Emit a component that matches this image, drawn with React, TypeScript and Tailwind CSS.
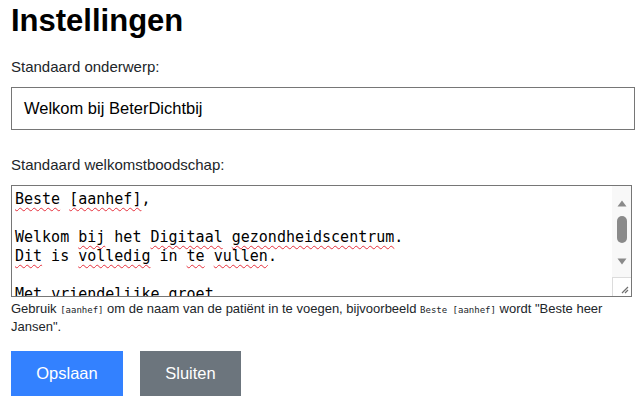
import React from "react";

const sans = { fontFamily: '"Liberation Sans", Arial, sans-serif' };
const mono = { fontFamily: '"DejaVu Sans Mono", "Liberation Mono", monospace' };

// words the spell checker flags get a red wavy underline
function Typo({ children }: { children: React.ReactNode }) {
  return (
    <span className="underline decoration-wavy decoration-[#e5303c] decoration-[1.2px] underline-offset-[3px]">
      {children}
    </span>
  );
}

function ScrollColumn() {
  return (
    <div className="w-[19px] shrink-0 flex flex-col items-center bg-[#f8f8f8]">
      <svg width="10" height="7" viewBox="0 0 10 7" className="mt-[14px]">
        <path d="M5 0.5 L9.5 6.5 L0.5 6.5 Z" fill="#8a8a8a" />
      </svg>
      <div className="mt-[9px] w-[10px] h-[27px] rounded-full bg-[#8a8a8a]" />
      <svg width="10" height="7" viewBox="0 0 10 7" className="mt-[15px]">
        <path d="M0.5 0.5 L9.5 0.5 L5 6.5 Z" fill="#8a8a8a" />
      </svg>
      <div className="mt-auto w-full h-[19px] border-t border-l border-[#dcdcdc] bg-white flex items-end justify-end">
        <svg width="10" height="10" viewBox="0 0 10 10" className="mb-[2px] mr-[2px]">
          <path d="M9 3 L3 9 M9 6 L6 9" stroke="#6f6f6f" strokeWidth="1.2" />
        </svg>
      </div>
    </div>
  );
}

export default function App() {
  return (
    <div className="w-[640px] h-[400px] overflow-hidden bg-white text-[#212529] px-[11px]" style={sans}>
      <h1 className="text-[31px] font-bold leading-[37px] text-black pt-[2px]">Instellingen</h1>

      <label className="block mt-[19px] text-[15px] leading-[17px]">Standaard onderwerp:</label>
      <div className="mt-[12px] w-[624px] h-[43px] border border-[#767676] flex items-center px-[12px] text-[16.5px] text-black">
        Welkom bij BeterDichtbij
      </div>

      <label className="block mt-[26px] text-[15px] leading-[17px]">Standaard welkomstboodschap:</label>
      <div className="mt-[12px] w-[621px] h-[112px] border border-[#767676] flex overflow-hidden">
        <div className="flex-1 overflow-hidden pl-[3px] pt-[4px] text-[15px] leading-[19px] text-black whitespace-pre" style={mono}>
          <div><Typo>Beste</Typo> <Typo>[aanhef]</Typo>,</div>
          <div>&nbsp;</div>
          <div>Welkom <Typo>bij</Typo> het <Typo>Digitaal</Typo> <Typo>gezondheidscentrum</Typo>.</div>
          <div><Typo>Dit</Typo> is <Typo>volledig</Typo> in <Typo>te</Typo> <Typo>vullen</Typo>.</div>
          <div>&nbsp;</div>
          <div>Met <Typo>vriendelijke</Typo> <Typo>groet</Typo></div>
        </div>
        <ScrollColumn />
      </div>

      <p className="mt-[3px] text-[13px] leading-[18px]">
        Gebruik <code className="text-[9px] leading-none" style={mono}>[aanhef]</code> om de naam van de patiënt in te voegen, bijvoorbeeld{" "}
        <code className="text-[9px] leading-none" style={mono}>Beste [aanhef]</code> wordt "Beste heer Jansen".
      </p>

      <div className="mt-[15px] flex gap-[17px]">
        <button className="w-[112px] h-[45px] bg-[#3381ff] text-white text-[16.5px]" style={sans}>Opslaan</button>
        <button className="w-[101px] h-[45px] bg-[#6c757d] text-white text-[16.5px]" style={sans}>Sluiten</button>
      </div>
    </div>
  );
}
